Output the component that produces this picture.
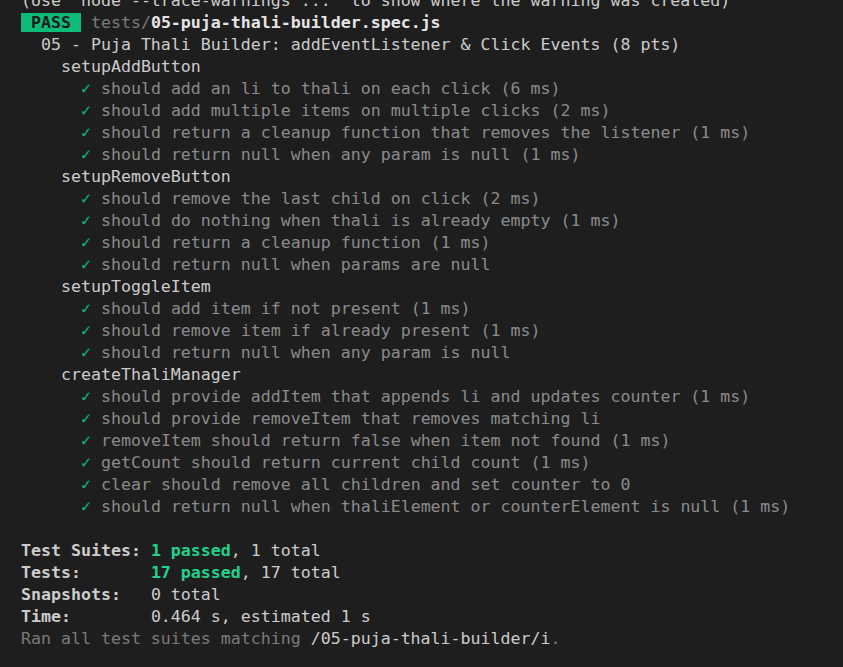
import React from 'react';

const groups = [
  {
    name: 'setupAddButton',
    tests: [
      'should add an li to thali on each click (6 ms)',
      'should add multiple items on multiple clicks (2 ms)',
      'should return a cleanup function that removes the listener (1 ms)',
      'should return null when any param is null (1 ms)',
    ],
  },
  {
    name: 'setupRemoveButton',
    tests: [
      'should remove the last child on click (2 ms)',
      'should do nothing when thali is already empty (1 ms)',
      'should return a cleanup function (1 ms)',
      'should return null when params are null',
    ],
  },
  {
    name: 'setupToggleItem',
    tests: [
      'should add item if not present (1 ms)',
      'should remove item if already present (1 ms)',
      'should return null when any param is null',
    ],
  },
  {
    name: 'createThaliManager',
    tests: [
      'should provide addItem that appends li and updates counter (1 ms)',
      'should provide removeItem that removes matching li',
      'removeItem should return false when item not found (1 ms)',
      'getCount should return current child count (1 ms)',
      'clear should remove all children and set counter to 0',
      'should return null when thaliElement or counterElement is null (1 ms)',
    ],
  },
];

const Line = ({ children, className = '' }) => (
  <div className={`h-[22px] leading-[22px] whitespace-pre ${className}`}>{children}</div>
);

const App = () => {
  return (
    <div className="h-[667px] w-[843px] overflow-hidden bg-[#1e1e1e] text-[#cccccc] text-[16.6px] font-['DejaVu_Sans_Mono',monospace]">
      <div className="-mt-[10px] pl-[21px]">
        <Line>(Use `node --trace-warnings ...` to show where the warning was created)</Line>
        <Line>
          <span className="bg-[#0dbc79] text-[#1e1e1e] font-bold"> PASS </span>
          <span className="text-[#7a7a7a]"> tests/</span>
          <span className="font-bold text-[#e5e5e5]">05-puja-thali-builder.spec.js</span>
        </Line>
        <Line>{'  05 - Puja Thali Builder: addEventListener & Click Events (8 pts)'}</Line>
        {groups.map((g) => (
          <React.Fragment key={g.name}>
            <Line>{'    ' + g.name}</Line>
            {g.tests.map((t) => (
              <Line key={t}>
                {'      '}
                <span className="text-[#0dbc79]">✓</span>
                <span className="text-[#8b8b8b]">{' ' + t}</span>
              </Line>
            ))}
          </React.Fragment>
        ))}
        <Line> </Line>
        <Line>
          <span className="font-bold">Test Suites: </span>
          <span className="font-bold text-[#23d18b]">1 passed</span>, 1 total
        </Line>
        <Line>
          <span className="font-bold">{'Tests:       '}</span>
          <span className="font-bold text-[#23d18b]">17 passed</span>, 17 total
        </Line>
        <Line>
          <span className="font-bold">{'Snapshots:   '}</span>0 total
        </Line>
        <Line>
          <span className="font-bold">{'Time:        '}</span>0.464 s, estimated 1 s
        </Line>
        <Line>
          <span className="text-[#7a7a7a]">Ran all test suites matching </span>
          /05-puja-thali-builder/i
          <span className="text-[#7a7a7a]">.</span>
        </Line>
      </div>
    </div>
  );
};

export default App;
